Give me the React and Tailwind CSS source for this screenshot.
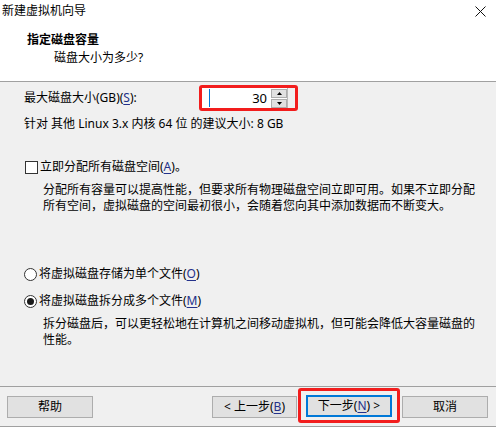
import React from "react";

function U({ children }) {
  return <span className="underline underline-offset-2 text-[#23318a]">{children}</span>;
}

function Btn({ children, w = "w-[86px]", extra = "" }) {
  return (
    <div
      className={`${w} h-[22px] flex items-center justify-center bg-[#e1e1e1] border border-[#adadad] text-[12px] leading-[16px] text-black ${extra}`}
    >
      {children}
    </div>
  );
}

export default function App() {
  return (
    <div className="w-[496px] h-[427px] bg-white flex flex-col font-['Noto_Sans','Noto_Sans_CJK_SC',sans-serif] text-[12px] leading-[16px] text-black overflow-hidden">
      {/* header */}
      <div className="h-[82px] border-b border-[#a0a0a0] bg-white flex flex-col">
        <div className="flex items-start mt-[3px] pl-[2px] pr-[10px] h-[16px]">
          <span>新建虚拟机向导</span>
          <div className="flex-1" />
          <svg width="11" height="11" viewBox="0 0 11 11" className="mt-[3px]">
            <path d="M0.5 0.5 L10.5 10.5 M10.5 0.5 L0.5 10.5" stroke="#111" strokeWidth="1" />
          </svg>
        </div>
        <div className="mt-[13px] pl-[27px] font-bold">指定磁盘容量</div>
        <div className="mt-[2px] pl-[54px]">磁盘大小为多少?</div>
      </div>

      {/* content */}
      <div className="h-[304px] bg-[#f0f0f0] flex flex-col">
        <div className="mt-[3px] flex items-center h-[26px] pl-[24px]">
          <span className="w-[175px]">
            最大磁盘大小(GB)(<U>S</U>):
          </span>
          <div className="w-[99px] h-[26px] border-[3px] border-[#f21d1d] rounded-[3px] flex">
            <div className="w-[68px] bg-white flex items-center relative">
              <div className="ml-[7px] w-[1px] h-[18px] bg-[#0078d7]" />
              <div className="flex-1 text-right pr-[3px] text-[13px]">30</div>
            </div>
            <div className="w-[17px] flex flex-col justify-center gap-[1px] bg-white pl-[1px]">
              <div className="h-[9px] bg-[#e1e1e1] border border-[#adadad] flex items-center justify-center">
                <svg width="5" height="3" viewBox="0 0 5 3">
                  <path d="M2.5 0 L5 3 L0 3 Z" fill="#000" />
                </svg>
              </div>
              <div className="h-[9px] bg-[#e1e1e1] border border-[#adadad] flex items-center justify-center">
                <svg width="5" height="3" viewBox="0 0 5 3">
                  <path d="M0 0 L5 0 L2.5 3 Z" fill="#000" />
                </svg>
              </div>
            </div>
            <div className="w-[1px] bg-[#b9b9b9]" />
            <div className="flex-1 bg-[#f0f0f0]" />
          </div>
        </div>

        <div className="mt-[5px] pl-[24px]">针对 其他 Linux 3.x 内核 64 位 的建议大小: 8 GB</div>

        <div className="mt-[27px] pl-[25px] flex items-center h-[16px]">
          <div className="w-[13px] h-[13px] border border-[#333333] bg-white" />
          <span className="ml-[2px]">
            立即分配所有磁盘空间(<U>A</U>)。
          </span>
        </div>

        <div className="mt-[7px] pl-[43px] leading-[16px]">
          <div>分配所有容量可以提高性能，但要求所有物理磁盘空间立即可用。如果不立即分配</div>
          <div>所有空间，虚拟磁盘的空间最初很小，会随着您向其中添加数据而不断变大。</div>
        </div>

        <div className="mt-[52px] pl-[24px] flex items-center h-[16px]">
          <div className="w-[13px] h-[13px] rounded-full border border-[#333333] bg-white" />
          <span className="ml-[2px]">
            将虚拟磁盘存储为单个文件(<U>O</U>)
          </span>
        </div>

        <div className="mt-[11px] pl-[24px] flex items-center h-[16px]">
          <div className="w-[13px] h-[13px] rounded-full border border-[#333333] bg-white flex items-center justify-center">
            <div className="w-[7px] h-[7px] rounded-full bg-[#1a1a1a]" />
          </div>
          <span className="ml-[2px]">
            将虚拟磁盘拆分成多个文件(<U>M</U>)
          </span>
        </div>

        <div className="mt-[7px] pl-[43px] leading-[16px]">
          <div>拆分磁盘后，可以更轻松地在计算机之间移动虚拟机，但可能会降低大容量磁盘的</div>
          <div>性能。</div>
        </div>
      </div>

      {/* button bar */}
      <div className="flex-1 bg-[#f0f0f0] border-t border-b border-[#a0a0a0] flex items-start">
        <Btn extra="ml-[7px] mt-[9px]">帮助</Btn>
        <div className="flex-1" />
        <Btn w="w-[85px]" extra="mt-[9px]">
          &lt; 上一步(<U>B</U>)
        </Btn>
        <div className="ml-[1px] mt-[1px] w-[102px] h-[35px] border-[3px] border-[#f21d1d] rounded-[3px] flex items-center justify-center">
          <div className="w-[86px] h-[22px] flex items-center justify-center bg-[#e1e1e1] border-2 border-[#0078d7]">
            下一步(<U>N</U>) &gt;
          </div>
        </div>
        <Btn extra="ml-[2px] mt-[9px] mr-[8px]">取消</Btn>
      </div>
    </div>
  );
}
